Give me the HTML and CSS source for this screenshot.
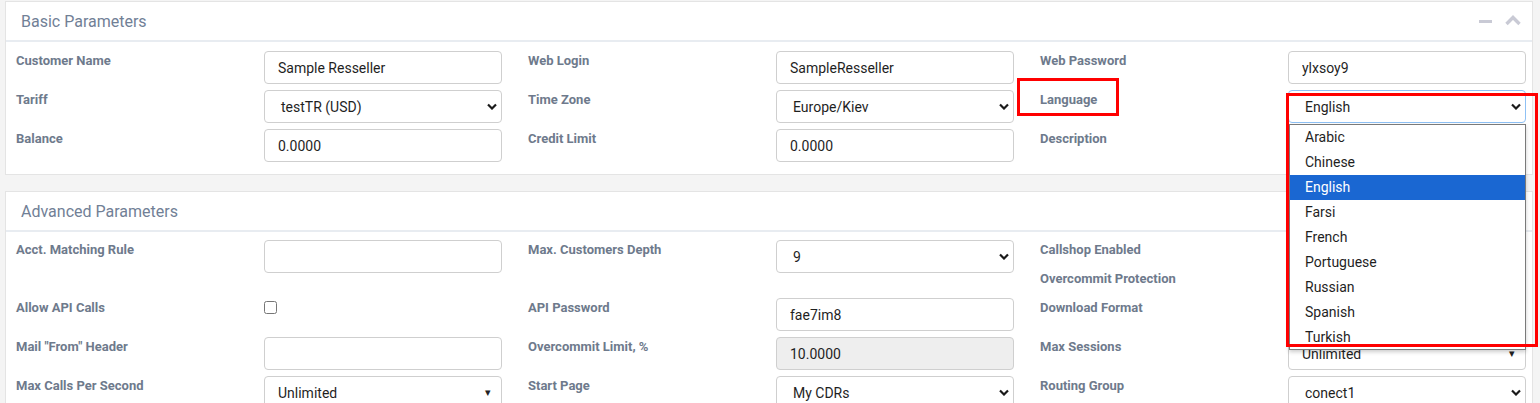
FILE: index.html
```html
<!DOCTYPE html>
<html lang="en">
<head>
    <meta charset="UTF-8">
    <meta name="viewport" content="width=device-width, initial-scale=1.0">
    <title>Reseller - Edit</title>
    <link rel="stylesheet" href="styles.css">
</head>
<body>
    <div class="page">
        <section class="box">
            <header class="box-header">
                <h3 class="box-title">Basic Parameters</h3>
                <div class="box-tools">
                    <span class="tool-minus"></span>
                    <svg class="tool-up" width="16" height="11" viewBox="0 0 16 11"><polyline points="1.5,9 8,2.5 14.5,9"/></svg>
                </div>
            </header>
            <div class="box-body form-grid basic-grid">
                <label class="fl">Customer Name</label>
                <input class="fc" type="text" value="Sample Resseller">
                <label class="fl">Web Login</label>
                <input class="fc" type="text" value="SampleResseller">
                <label class="fl">Web Password</label>
                <input class="fc" type="text" value="ylxsoy9">

                <label class="fl">Tariff</label>
                <div class="fc pick" role="combobox">testTR (USD)<svg class="chev" width="10" height="7" viewBox="0 0 10 7"><polyline points="1,1.5 5,5.5 9,1.5"/></svg></div>
                <label class="fl">Time Zone</label>
                <div class="fc pick" role="combobox">Europe/Kiev<svg class="chev" width="10" height="7" viewBox="0 0 10 7"><polyline points="1,1.5 5,5.5 9,1.5"/></svg></div>
                <label class="fl">Language</label>
                <div class="fc pick focused" role="combobox">English<svg class="chev" width="10" height="7" viewBox="0 0 10 7"><polyline points="1,1.5 5,5.5 9,1.5"/></svg>
                    <ul class="dropdown-list">
                        <li>Arabic</li>
                        <li>Chinese</li>
                        <li class="selected">English</li>
                        <li>Farsi</li>
                        <li>French</li>
                        <li>Portuguese</li>
                        <li>Russian</li>
                        <li>Spanish</li>
                        <li>Turkish</li>
                    </ul>
                </div>

                <label class="fl">Balance</label>
                <input class="fc" type="text" value="0.0000">
                <label class="fl">Credit Limit</label>
                <input class="fc" type="text" value="0.0000">
                <label class="fl">Description</label>
                <input class="fc" type="text" value="">
            </div>
        </section>

        <section class="box">
            <header class="box-header">
                <h3 class="box-title">Advanced Parameters</h3>
                <div class="box-tools">
                    <span class="tool-minus"></span>
                    <svg class="tool-up" width="16" height="11" viewBox="0 0 16 11"><polyline points="1.5,9 8,2.5 14.5,9"/></svg>
                </div>
            </header>
            <div class="box-body form-grid advanced-grid">
                <label class="fl">Acct. Matching Rule</label>
                <input class="fc" type="text" value="">
                <label class="fl">Max. Customers Depth</label>
                <div class="fc pick" role="combobox">9<svg class="chev" width="10" height="7" viewBox="0 0 10 7"><polyline points="1,1.5 5,5.5 9,1.5"/></svg></div>
                <div class="check-stack">
                    <label class="fl">Callshop Enabled</label>
                    <input class="cb" type="checkbox">
                    <label class="fl">Overcommit Protection</label>
                    <input class="cb" type="checkbox">
                </div>

                <label class="fl">Allow API Calls</label>
                <div class="cb-cell"><input class="cb" type="checkbox"></div>
                <label class="fl">API Password</label>
                <input class="fc" type="text" value="fae7im8">
                <label class="fl">Download Format</label>
                <div class="fc pick" role="combobox"><svg class="chev" width="10" height="7" viewBox="0 0 10 7"><polyline points="1,1.5 5,5.5 9,1.5"/></svg></div>

                <label class="fl">Mail "From" Header</label>
                <input class="fc" type="text" value="">
                <label class="fl">Overcommit Limit, %</label>
                <input class="fc" type="text" value="10.0000" disabled>
                <label class="fl">Max Sessions</label>
                <div class="fc combo" role="combobox">Unlimited<span class="caret">&#9662;</span></div>

                <label class="fl">Max Calls Per Second</label>
                <div class="fc combo" role="combobox">Unlimited<span class="caret">&#9662;</span></div>
                <label class="fl">Start Page</label>
                <div class="fc pick" role="combobox">My CDRs<svg class="chev" width="10" height="7" viewBox="0 0 10 7"><polyline points="1,1.5 5,5.5 9,1.5"/></svg></div>
                <label class="fl">Routing Group</label>
                <div class="fc pick" role="combobox">conect1<svg class="chev" width="10" height="7" viewBox="0 0 10 7"><polyline points="1,1.5 5,5.5 9,1.5"/></svg></div>
            </div>
        </section>

        <div class="mark mark-label"></div>
        <div class="mark mark-list"></div>
    </div>
</body>
</html>
```

FILE: styles.css
```css
body {
    margin: 0;
    background-color: #f4f4f4;
    font-family: Roboto, "Liberation Sans", Arial, sans-serif;
    color: #222;
    overflow: hidden;
}
.page {
    position: relative;
    padding: 1px 7px 0 5px;
}
.box {
    background-color: #fff;
    border: 1px solid #e4e4e4;
    margin-bottom: 16px;
}
.box-header {
    display: flex;
    align-items: center;
    height: 38px;
    padding: 0 11px 0 15px;
    border-bottom: 2px solid #e8ecf1;
}
.box-title {
    margin: 0;
    font-size: 16px;
    font-weight: 400;
    color: #718096;
}
.box-tools {
    margin-left: auto;
    display: flex;
    align-items: center;
    gap: 13px;
}
.tool-minus {
    display: block;
    width: 13px;
    height: 3px;
    background-color: #c9cad5;
    margin-top: 1px;
}
.tool-up {
    display: block;
    margin-top: -1px;
}
.tool-up polyline {
    fill: none;
    stroke: #c9cad5;
    stroke-width: 3.4;
}
.box-body {
    padding: 9px 6px 12px 10px;
}
.form-grid {
    display: grid;
    grid-template-columns: 222px 238px 222px 238px 222px 238px;
    column-gap: 26px;
    row-gap: 6px;
}
.basic-grid {
    grid-template-rows: 33px 33px 33px;
}
.advanced-grid {
    padding-top: 8px;
    grid-template-rows: 52px 33px 33px 33px;
}
.fl {
    display: block;
    padding-top: 3px;
    font-size: 13px;
    line-height: 14px;
    font-weight: 700;
    color: #6e7a8c;
}
.fc {
    box-sizing: border-box;
    width: 238px;
    height: 33px;
    margin: 0;
    padding: 0 13px;
    border: 1px solid #cfcfcf;
    border-radius: 4px;
    background-color: #fff;
    font-family: Roboto, "Liberation Sans", Arial, sans-serif;
    font-size: 14px;
    color: #1f1f1f;
    outline: none;
}
.fc:disabled {
    background-color: #eee;
    color: #1f1f1f;
}
.pick {
    position: relative;
    display: flex;
    align-items: center;
    padding: 1px 4px 0 16px;
    cursor: default;
}
.chev {
    margin-left: auto;
    margin-top: -1px;
}
.chev polyline {
    fill: none;
    stroke: #1a1a1a;
    stroke-width: 2.2;
}
.focused {
    border-color: #8fc1f5;
}
.combo {
    display: flex;
    align-items: center;
}
.caret {
    margin-left: auto;
    margin-right: -3px;
    font-size: 11px;
    color: #222;
}
.cb {
    width: 13px;
    height: 13px;
    margin: 3px 0 0 0;
}
.cb-cell {
    display: block;
}
.check-stack {
    grid-column: span 2;
    display: grid;
    grid-template-columns: 222px 238px;
    grid-template-rows: 29px 23px;
    column-gap: 26px;
}
.dropdown-list {
    position: absolute;
    top: 33px;
    left: 0;
    width: 235px;
    height: 224px;
    margin: 0;
    padding: 0;
    list-style: none;
    box-sizing: content-box;
    background-color: #fff;
    border: 1px solid #7a7a7a;
    box-shadow: 0 2px 4px rgba(0, 0, 0, 0.2);
    overflow: hidden;
    z-index: 5;
}
.dropdown-list li {
    height: 25px;
    line-height: 25px;
    padding-left: 15px;
    font-size: 14px;
    color: #1f1f1f;
}
.dropdown-list .selected {
    background-color: #1a67d2;
    color: #fff;
}
.mark {
    position: absolute;
    border: 3px solid #ff0000;
    box-sizing: border-box;
    z-index: 10;
}
.mark-label {
    left: 1017px;
    top: 78px;
    width: 102px;
    height: 38px;
}
.mark-list {
    left: 1286px;
    top: 93px;
    width: 252px;
    height: 254px;
}
```
